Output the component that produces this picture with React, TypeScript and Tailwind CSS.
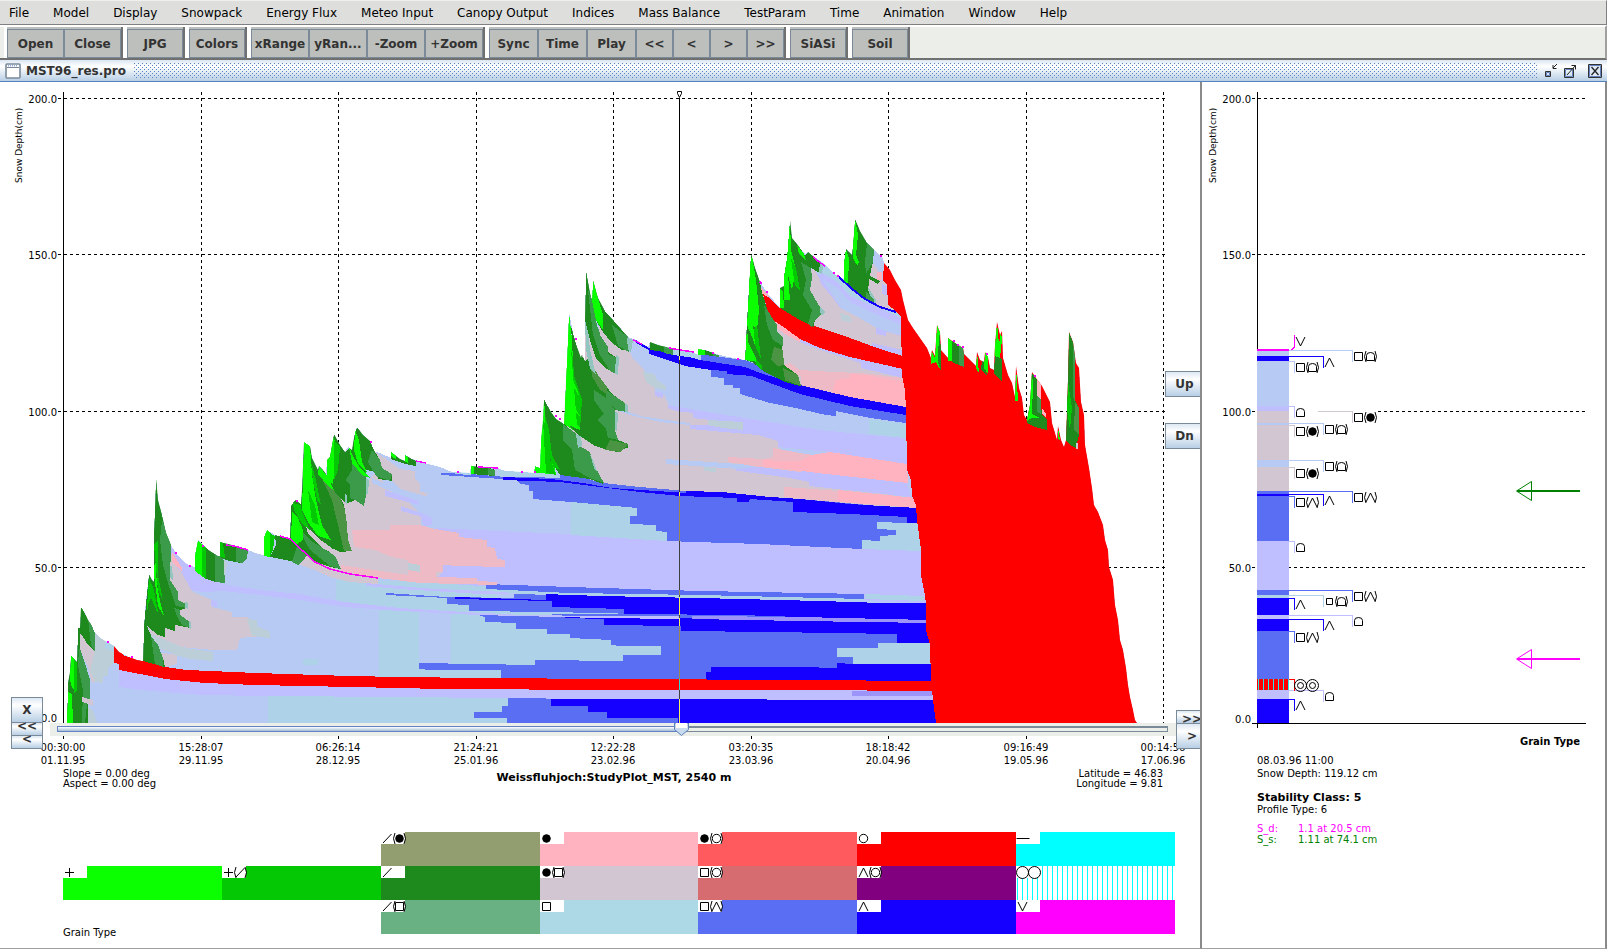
import React, { useState } from "react";

const LBLUE = "#b6caf3";
const LAV = "#bfbfff";
const LAKE = "#aed3e8";
const GREY = "#d3c6d3";
const MIST = "#bccfd8";
const SALMON = "#eebac6";
const PINK = "#ffb3c0";
const ROYAL = "#5a6ef4";
const BLUE = "#1500ff";
const PURPLE = "#9c94f8";
const RED = "#ff0000";
const MAGENTA = "#ff00ff";
const BRIGHT = "#0cff00";
const GREEN = "#04c804";
const DARK = "#1e8a1e";
const MID = "#3c9a4b";
const OLIVE = "#4b9444";
const TEAL = "#93c5bf";

const silhouette =
  "67,723 68,683 70,672 71,655 75,660 77,662 78,628 80,628 81,607 85,613 88,620 92,626 95,633 100,638 107,642 114,646 119,652 127,656 137,660 143,661 144,625 146,600 149,574 152,580 154,582 154,532 155,510 156,477 158,500 162,515 166,533 171,545 177,555 184,562 190,566 195,567 195,555 198,540 203,545 210,551 218,556 220,556 220,542 232,545 248,550 258,554 264,555 264,537 267,530 275,535 288,538 290,538 291,506 295,500 301,504 302,490 304,442 310,446 312,458 318,470 319,466 323,470 326,474 327,460 330,457 333,440 334,434 340,445 345,452 348,447 352,450 355,432 357,427 363,435 370,441 375,452 380,453 391,458 391,452 400,459 405,461 405,455 412,459 428,464 440,467 452,472 470,473 471,466 490,468 498,468 505,471 522,472 534,473 535,466 540,468 541,440 543,420 544,399 551,412 556,419 564,424 565,400 567,360 569,312 573,333 577,347 581,358 582,354 585,361 585,320 586,270 590,293 592,300 593,280 598,298 605,311 614,321 622,330 628,337 636,340 648,347 650,342 658,345 670,348 680,350 692,352 698,355 698,349 706,350 716,354 728,357 745,360 747,320 750,270 751,253 755,268 760,282 768,294 780,308 780,288 784,286 784,276 787,258 790,220 792,238 797,244 800,248 805,254 808,252 816,258 824,264 833,273 840,278 844,279 844,262 846,249 852,255 854,235 855,219 860,231 867,243 875,251 882,257 884,263 890,270 895,280 901,290 903,300 908,320 913,328 920,338 927,348 931,358 932,350 935,356 937,325 940,332 941,350 948,358 948,338 955,343 963,348 964,354 970,360 976,366 977,352 980,360 984,362 985,352 988,357 990,368 994,370 995,345 997,322 1000,335 1002,331 1003,358 1008,375 1012,383 1015,397 1016,366 1019,388 1022,398 1024,415 1027,420 1030,405 1032,372 1036,378 1042,386 1046,394 1050,402 1052,423 1055,433 1057,440 1058,426 1061,440 1064,447 1066,440 1068,380 1069,332 1073,342 1076,363 1079,368 1081,402 1084,415 1085,445 1089,468 1092,488 1094,505 1098,512 1103,525 1105,540 1108,550 1109,567 1113,580 1115,605 1118,620 1120,640 1123,650 1126,668 1128,685 1130,697 1133,710 1135,720 1137,723";

type Shape = [string, string];

const layers: Shape[] = [
  // ground layers
  [LAKE, "268,694 510,697 510,723 268,723"],
  [ROYAL, "508,697 508,706 502,706 502,712 474,712 474,718 507,718 507,723 936,723 933,699"],
  [BLUE, "551,697 551,706 588,706 588,712 607,712 607,718 678,718 678,723 936,723 933,699"],
  // mid layers, lake and faceted
  [LAKE, "336,580 497,582 497,600 480,615 336,602"],
  [LAKE, "379,606 680,612 680,680 379,677"],
  [LBLUE, "419,612 451,612 451,664 419,664"],
  [LAKE, "303,659 318,659 318,665 303,665"],
  [ROYAL, "478,615 485,617 485,622 516,623 516,629 547,629 547,634 570,634 570,638 611,640 611,645 620,646 661,646 661,655 623,655 623,661 535,660 535,665 419,663 419,669 430,670 501,670 501,679 932,682 926,612"],
  [BLUE, "565,616 679,618 800,620 930,622 930,643 897,643 897,634 835,633 768,632 681,631 681,626 604,625 604,619 565,618"],
  [LAKE, "837,648 878,648 878,643 930,643 931,665 853,665 853,657 837,657"],
  [BLUE, "706,680 706,672 711,672 711,667 800,667 837,668 837,663 853,664 931,664 932,682"],
  [ROYAL, "386,593 447,597 514,598 514,594 640,597 640,614 550,612 469,611 469,605 447,604 447,598 386,595"],
  [BLUE, "455,597 546,600 546,594 600,596 700,598 820,601 882,603 930,603 930,620 800,617 740,615 634,614 624,614 624,609 552,607 552,601 455,599"],
  // lavender slab
  [LAV, "436,528 520,532 600,535 668,541 760,544 820,547 922,551 926,603 864,600 700,595 480,586 420,582 420,540"],
  [LAKE, "497,589 700,595 864,599 864,601 700,598 497,593"],
  [ROYAL, "486,584 570,587 700,591 864,594 864,599 700,595 570,593 486,589"],
  [LAKE, "865,594 924,596 924,601 865,599"],
  // royal slab
  [ROYAL, "441,473 470,474 506,477 560,475 583,477 603,483 640,487 686,491 800,499 880,506 907,510 907,523 877,522 877,529 896,530 896,535 880,536 880,541 862,540 862,549 820,547 760,544 694,542 667,541 640,535 571,525 571,502 533,499 533,491 529,491 529,485 520,484 516,480 441,475"],
  [LAKE, "571,502 637,508 637,516 630,516 630,524 656,525 656,531 667,532 667,541 571,535"],
  [LAKE, "907,523 877,522 877,529 896,530 896,535 880,536 880,541 862,540 862,549 922,551 920,523"],
  // settled rounded grains above the slab
  [GREY, "564,424 560,380 585,330 628,350 636,360 644,366 650,383 662,390 668,403 700,412 740,420 758,430 778,441 778,447 809,475 809,482 910,498 916,508 880,506 800,499 686,491 640,487 603,483 580,477"],
  [LBLUE, "590,400 620,409 640,416 680,422 690,423 690,425 660,422 630,415 612,409"],
  [LAV, "668,403 758,418 820,426 905,436 907,464 830,452 778,447 778,441 758,435 690,429 690,425 727,425 727,422 693,418 693,413 676,411 668,408"],
  [MIST, "708,420 743,422 743,430 722,428 708,425"],
  [LBLUE, "628,337 650,347 751,362 800,388 870,418 906,423 906,438 870,435 820,430 758,420 720,414 668,405 668,396 655,393 655,385 650,380 644,370 632,358"],
  [MIST, "643,372 655,374 657,380 666,386 666,390 655,388 646,382"],
  [LAKE, "869,419 906,424 906,438 869,434"],
  [LAV, "655,391 663,393 663,398 655,396"],
  [LBLUE, "666,459 754,465 754,470 666,464"],
  [MIST, "704,467 716,468 716,472 704,471"],
  [LAV, "732,470 760,466 830,474 907,483 911,497 809,486 809,482 790,478"],
  [SALMON, "728,457 763,459 773,457 773,448 800,453 820,456 800,472 760,467 728,462"],
  [PINK, "763,460 778,461 800,461 812,455 830,452 907,464 908,483 826,474 763,466"],
  [SALMON, "784,487 800,488 838,491 838,502 784,497"],
  [PINK, "838,490 916,498 918,508 838,502"],
  [BLUE, "503,477 551,479 583,483 612,488 686,493 686,491 722,492 770,497 800,499 850,504 880,506 918,508 920,523 907,523 907,517 850,514 793,512 793,502 750,499 749,502 737,502 737,498 680,496 640,492 600,487 560,482 503,480"],
  // upper facets
  [ROYAL, "701,354 728,358 745,360 765,368 800,382 820,390 906,412 906,423 870,418 836,411 836,416 826,415 800,409 770,403 740,394 740,388 733,388 733,385 724,385 724,378 711,377 711,370 701,365"],
  [GREY, "762,300 770,318 785,328 800,339 861,359 903,370 907,407 850,396 801,386 780,378 770,340"],
  [SALMON, "784,365 790,363 800,370 833,372 861,373 903,378 907,407 850,396 801,386 801,376 784,372"],
  [PINK, "832,393 836,380 850,378 850,374 866,375 903,382 907,408 850,397"],
  [LAV, "800,337 861,356 903,366 903,378 861,368 861,363 820,350 800,342"],
  [BLUE, "636,340 649,348 679,354 700,360 745,367 760,373 800,385 850,397 906,407 906,415 850,406 800,394 770,383 752,376 727,374 727,371 711,370 685,366 649,354 649,350 636,343"],
  // late winter layers
  [LAV, "815,255 884,256 903,300 903,360 860,340 815,320"],
  [LAKE, "816,258 833,270 845,278 870,304 902,314 902,318 880,312 850,300 838,293 822,278 816,272"],
  [LAV, "820,272 838,282 850,296 902,318 902,326 880,320 850,310 820,290"],
  [LBLUE, "822,279 838,288 850,302 880,316 902,325 902,335 880,330 870,327 850,322 840,306"],
  [GREY, "813,265 822,285 833,298 840,308 856,316 880,330 902,336 902,356 850,338 800,322 806,290"],
  [MIST, "840,313 850,316 852,322 842,321"],
  [LAV, "876,328 886,331 886,336 876,334"],
  [LAV, "872,343 902,350 902,355 872,347"],
  [GREY, "868,262 884,268 888,285 888,305 896,311 875,306 866,298"],
  [LBLUE, "872,248 884,258 883,281 878,280 878,270 872,262"],
  [PINK, "877,272 882,272 882,280 877,280"],
  [LAV, "882,284 887,286 888,296 882,294"],
  [PINK, "757,284 768,294 768,302 758,296"],
  [PINK, "766,314 785,328 800,338 800,342 785,334 766,320"],
  [RED, "763,294 768,297 780,308 800,320 820,328 850,338 880,349 903,356 903,369 850,357 820,348 800,339 785,328 770,318 766,305"],
  // early winter, left
  [LAV, "165,540 172,548 184,562 195,568 204,577 223,584 260,590 300,594 345,602 400,608 445,611 523,615 600,616 680,616 680,619 600,618 478,615 400,611 345,607 300,600 260,595 223,591 205,592 190,590 178,575"],
  [GREY, "171,552 173,562 182,573 190,588 193,592 205,597 212,600 212,607 232,612 232,617 247,617 255,623 255,628 262,630 262,636 240,638 237,650 213,650 180,647 155,640 147,627 155,600"],
  [MIST, "150,633 165,640 185,648 213,652 213,661 190,659 176,655 158,648"],
  [MIST, "247,619 257,620 257,626 270,632 270,638 252,636"],
  [GREY, "157,652 177,655 177,664 165,667 157,660"],
  [PINK, "172,552 182,568 182,572 172,562"],
  [LAV, "211,600 217,601 217,607 211,606"],
  [GREY, "300,552 320,562 340,570 378,577 378,584 350,582 330,577 315,570 300,565"],
  [LAV, "366,583 420,588 480,591 508,592 508,594 480,594 400,589 366,586"],
  [GREY, "300,520 327,478 345,490 365,490 370,478 378,470 385,487 400,497 410,503 421,515 421,525 443,565 443,572 436,578 400,578 340,570 325,555"],
  [SALMON, "352,530 390,530 390,525 420,525 435,529 459,533 459,537 487,540 487,547 495,548 497,559 505,560 505,567 458,566 443,565 443,572 436,572 436,577 477,578 477,581 497,582 497,585 420,583 378,578 341,571 341,565 408,575 408,560 392,557 375,550 354,547"],
  [MIST, "408,563 420,565 420,572 408,570"],
  [LAV, "458,566 505,567 497,582 477,580 477,574 458,571"],
  [GREY, "375,452 385,458 400,469 415,471 415,479 420,484 420,492 428,493 425,496 400,489 392,480 378,470"],
  [LAV, "385,490 400,495 419,501 419,505 385,496"],
  [LAV, "401,506 424,514 432,518 432,525 424,526 420,516 401,511"],
  [LBLUE, "372,478 390,486 418,494 418,498 390,491 372,483"],
  // melt-freeze band and what lies under it
  [LAV, "119,669 140,673 205,682 400,687 932,690 933,700 594,699 400,697 268,696 200,695 140,690 119,687"],
  [PURPLE, "852,691 932,691 932,696 852,696"],
  [PURPLE, "692,616 800,617 930,620 930,623 800,621 692,619"],
  [RED, "114,645 119,651 125,656 143,661 165,667 187,670 256,673 350,676 400,677 480,678 612,679 800,680 932,681 933,691 800,690 615,690 440,689 400,688 256,685 205,683 165,679 140,674 119,670 119,664 114,663"],
  [RED, "884,262 883,281 887,285 888,305 895,310 901,317 902,375 905,390 906,410 907,470 911,480 912,496 916,505 917,520 919,535 921,550 921,575 924,590 926,603 926,630 930,645 931,680 933,700 936,723 1140,723 1140,320 900,240"],
  // November
  [GREY, "80,628 95,650 100,680 92,683 88,667 80,650"],
  [MIST, "95,630 114,642 114,663 108,668 108,675 103,677 103,683 95,682 90,670 95,650"],
  [LAKE, "105,640 114,645 114,652 105,648"],
  [DARK, "67,723 68,683 71,655 77,662 78,628 80,605 92,626 95,633 95,652 88,645 82,635 80,634 80,650 84,660 90,680 90,700 88,705 88,723"],
  [MID, "80,648 84,660 90,680 90,700 87,705 85,723 82,723 83,690 78,665 79,650"],
  [MID, "88,618 95,633 95,652 91,645"],
  [BRIGHT, "67,723 68,692 72,694 73,723"],
  [BRIGHT, "70,680 71,655 75,660 74,690 72,688"],
  [GREEN, "74,660 77,662 77,690 74,694"],
  [GREY, "82,697 93,700 93,706 88,704 82,702"],
  [MIST, "88,707 93,710 97,723 88,723"],
  // December
  [DARK, "143,661 144,625 149,574 154,582 154,532 156,477 162,515 171,545 170,580 178,592 178,600 186,604 186,608 180,610 180,615 190,622 190,628 175,625 175,631 165,628 165,637 158,635 147,626 155,645 163,658 165,667"],
  [MID, "162,520 171,545 170,580 174,588 170,590 163,565 160,540"],
  [MID, "168,575 170,580 178,592 178,600 186,604 186,608 176,606 172,595"],
  [MID, "174,608 180,610 180,615 190,622 190,628 182,625 177,616"],
  [TEAL, "170,566 172,566 173,580 170,578"],
  [TEAL, "185,602 188,603 188,609 185,608"],
  [TEAL, "189,621 191,622 191,629 189,628"],
  [MID, "151,636 158,645 163,658 163,667 155,664"],
  [BRIGHT, "154,575 155,555 157,585 161,605 164,616 158,606"],
  [GREEN, "154,545 158,540 158,575 163,600 158,590"],
  [GREEN, "147,608 149,578 154,590 158,612 150,612"],
  [DARK, "148,604 151,598 158,614 163,622 156,628 148,620"],
  [BRIGHT, "195,571 195,555 198,540 202,545 203,577"],
  [GREEN, "202,544 206,548 206,579 202,576"],
  [DARK, "206,548 215,554 215,582 206,579"],
  [MID, "215,554 222,557 225,562 225,583 215,582"],
  [MIST, "224,560 227,562 226,572 224,576"],
  [DARK, "220,557 220,542 240,546 240,563 226,560"],
  [GREEN, "220,557 220,542 223,543 225,558"],
  [MID, "236,547 248,550 247,558 243,563 236,562"],
  [BRIGHT, "264,556 264,537 267,530 270,533 270,557"],
  [GREEN, "270,533 275,536 273,550 270,557"],
  [DARK, "275,535 288,538 294,543 302,552 300,560 290,561 270,557 276,545"],
  [MID, "297,546 308,554 303,561 298,565 292,562"],
  // Christmas storm
  [DARK, "290,540 291,506 295,500 301,504 303,442 310,446 326,474 338,492 344,505 347,525 348,540 352,551 340,552 325,545 341,569 330,567 315,562 303,551"],
  [OLIVE, "320,474 330,480 338,492 345,510 347,525 348,540 352,551 344,551 338,525 332,500"],
  [MID, "296,525 310,540 335,556 341,569 330,566 310,550"],
  [GREY, "306,526 318,538 332,548 334,554 322,548 308,534"],
  [BRIGHT, "302,510 304,442 310,446 312,475 316,500 322,525 331,540 318,536 308,522"],
  [BRIGHT, "291,540 292,512 298,518 303,530 303,540 296,545"],
  [GREEN, "308,490 315,505 319,525 312,522"],
  [GREEN, "293,503 301,505 302,512 310,530 302,524 294,510"],
  [GREEN, "311,462 316,480 321,505 317,500 313,480"],
  [BRIGHT, "319,466 328,477 336,492 328,486 318,474"],
  [DARK, "327,475 327,460 334,434 345,452 351,446 357,427 370,441 375,452 380,460 382,468 392,474 392,481 378,479 378,472 366,470 367,490 364,506 355,500 346,504 335,492"],
  [MID, "352,460 366,475 367,490 364,506 355,500 350,498 350,485 346,480 352,470"],
  [MID, "372,450 380,460 382,468 392,474 390,481 376,476 368,462"],
  [TEAL, "366,478 369,480 368,494 366,494"],
  [TEAL, "345,494 347,495 347,504 345,503"],
  [BRIGHT, "327,478 327,460 334,436 336,450 333,485"],
  [GREEN, "334,440 340,447 338,470 334,480"],
  [BRIGHT, "354,450 355,430 359,440 362,462 368,474 358,464"],
  [BRIGHT, "349,447 353,456 360,468 370,478 362,475 352,463"],
  [DARK, "391,452 405,460 405,455 416,461 416,466 405,464 391,459"],
  [BRIGHT, "405,462 405,455 408,457 408,463"],
  [BRIGHT, "391,456 391,452 396,455 396,459"],
  [DARK, "471,474 471,466 490,468 495,470 495,476"],
  [BRIGHT, "471,474 471,466 474,466 474,474"],
  [MID, "488,468 495,470 495,476 488,475"],
  [LAKE, "455,472 471,472 471,475 455,474"],
  [LAKE, "498,470 535,472 560,475 560,478 498,476"],
  // February storms
  [BRIGHT, "534,473 535,466 540,468 541,430 544,399 547,420 548,440 556,474"],
  [GREEN, "543,420 546,425 549,455 556,475 546,473"],
  [DARK, "544,399 551,412 564,424 575,435 580,448 590,452 594,465 602,480 603,484 590,479 560,475 550,460 547,440"],
  [GREEN, "545,415 549,430 552,455 560,470 554,468 546,448"],
  [MID, "563,424 577,434 578,445 590,452 594,465 604,483 590,478 575,470 572,450 563,440"],
  [TEAL, "576,434 581,436 582,446 578,448"],
  [TEAL, "590,454 594,462 597,472 594,468"],
  [BRIGHT, "564,424 566,380 569,312 572,340 576,380 580,425 583,436 570,428"],
  [GREEN, "571,350 577,375 586,400 584,432 577,425"],
  [DARK, "571,326 577,347 585,361 590,357 593,367 597,375 607,387 611,393 626,404 627,412 615,410 615,430 618,440 628,444 628,448 621,449 620,452 610,451 595,446 580,436 568,425 580,430 582,400 574,375"],
  [MID, "594,390 606,398 615,410 615,430 618,440 608,438 606,428 597,420 604,414 594,400"],
  [MID, "606,390 626,404 627,412 616,410 606,400"],
  [OLIVE, "590,360 594,368 598,375 607,387 607,394 600,390 592,376"],
  [OLIVE, "610,440 628,444 621,452 605,450"],
  [TEAL, "615,412 618,413 617,432 615,430"],
  [TEAL, "625,404 628,405 628,413 625,412"],
  [BRIGHT, "571,375 578,392 580,398 573,386"],
  [BRIGHT, "568,392 574,406 580,416 572,410"],
  [TEAL, "585,320 588,330 590,350 596,375 590,368 586,350"],
  [DARK, "585,320 586,270 592,300 597,330 607,345 608,352 617,358 617,374 605,368 596,358 590,340"],
  [MID, "588,290 592,300 597,326 608,346 608,354 617,358 617,374 610,371 600,355 593,335"],
  [TEAL, "616,354 619,358 618,375 615,374"],
  [GREY, "598,322 605,333 612,342 628,352 632,362 620,358 608,347 600,335"],
  [DARK, "593,280 605,311 614,321 628,337 630,350 622,350 612,343 603,332 597,322"],
  [MID, "612,325 628,337 629,352 618,346"],
  [BRIGHT, "592,300 593,280 598,298 603,315 603,330 596,320"],
  [TEAL, "627,338 633,340 631,352 628,350"],
  // March
  [DARK, "650,350 650,342 665,346 665,352"],
  [MID, "664,346 673,349 673,355 664,353"],
  [LAKE, "673,350 701,352 701,359 673,355"],
  [BRIGHT, "698,355 698,349 705,350 705,355"],
  [DARK, "705,350 713,353 713,356 705,355"],
  [MID, "713,353 720,356 718,357 713,356"],
  [DARK, "745,360 747,320 751,253 760,282 762,292 768,312 777,325 777,332 783,338 782,350 784,365 798,375 800,386 785,382 765,372 752,362"],
  [BRIGHT, "745,360 748,310 750,265 752,256 756,280 759,310 757,330 753,325 758,362"],
  [GREEN, "754,330 757,325 760,350 762,370 756,365"],
  [DARK, "747,325 750,332 757,350 765,368 758,362 748,342"],
  [MID, "764,305 777,325 777,332 783,338 783,346 773,340 767,325"],
  [OLIVE, "774,347 783,350 784,365 778,366 771,360"],
  [OLIVE, "783,368 798,375 801,386 785,380"],
  [DARK, "780,308 780,288 784,276 787,258 790,220 800,248 805,256 808,252 822,264 820,273 811,268 812,278 810,290 818,304 822,312 815,318 814,327 800,320"],
  [BRIGHT, "784,300 784,276 787,258 790,220 791,250 796,270 792,290 788,275 790,300"],
  [BRIGHT, "780,308 780,288 783,292 784,308"],
  [BRIGHT, "797,245 804,254 806,260 799,254"],
  [GREEN, "791,258 796,268 800,290 795,286"],
  [MID, "801,262 811,268 812,278 810,290 818,304 823,312 814,322 812,327 808,324 812,310 803,295 806,280"],
  [TEAL, "820,262 823,266 822,274 819,273"],
  [TEAL, "820,306 825,312 822,316 820,312"],
  // April
  [DARK, "844,283 844,262 846,249 852,255 855,219 867,243 874,250 873,262 870,275 868,290 874,297 874,304 862,298 852,290"],
  [BRIGHT, "844,282 844,262 846,249 849,258 848,284"],
  [BRIGHT, "853,258 853,240 855,219 858,235 856,255 862,270 856,264"],
  [MID, "867,243 874,250 873,262 866,274 865,262"],
  [DARK, "858,262 868,275 880,281 878,284 866,277 858,270"],
  [TEAL, "868,288 870,290 876,300 876,304 872,303"],
  [MID, "866,292 874,300 874,304 866,300"],
  [BRIGHT, "931,364 931,350 935,358 937,325 940,332 941,371 936,362"],
  [DARK, "939,330 941,348 941,371 938,362"],
  [BRIGHT, "948,361 948,338 953,342 953,361"],
  [DARK, "952,340 959,346 959,365 952,362"],
  [MID, "959,345 964,348 964,367 959,365"],
  [BRIGHT, "976,368 977,352 979,373"],
  [DARK, "981,370 982,360 984,362 987,375"],
  [BRIGHT, "984,368 985,352 988,357 988,374"],
  [DARK, "994,374 995,352 1002,360 1002,381"],
  [BRIGHT, "994,356 997,322 999,345 1001,331 1002,340 1000,358"],
  [BRIGHT, "1015,401 1016,366 1018,401"],
  [DARK, "1027,423 1029,400 1031,372 1037,380 1040,396 1042,415 1047,420 1047,430 1035,427"],
  [BRIGHT, "1027,421 1028,405 1032,372 1033,385 1032,414 1040,418 1032,418"],
  [PINK, "1037,378 1041,385 1041,400 1037,395"],
  [MID, "1037,395 1041,400 1041,414 1037,412"],
  [PINK, "1042,408 1046,414 1046,417 1042,414"],
  [BRIGHT, "1058,439 1058,428 1060,440"],
  [DARK, "1066,440 1067,400 1069,332 1073,342 1075,400 1079,408 1079,435 1076,448 1070,445"],
  [MID, "1073,342 1075,346 1075,402 1073,396"],
  [OLIVE, "1075,402 1079,408 1079,435 1074,430"],
  [GREEN, "1067,410 1068,382 1072,408 1070,430"],
  [GREY, "1076,443 1078,443 1078,449 1076,449"],
];

const hoarLines = [
  "226,545 234,546 248,550",
  "280,536 290,539 303,551 315,562 330,569 350,574 378,578",
  "416,461 426,463",
  "478,467 498,468",
  "633,340 642,344",
  "669,348 680,350 694,352",
  "760,282 762,284",
  "813,257 818,261 825,266",
];

const hoarDots = [
  [107, 641], [131, 656], [175, 552], [189, 565], [202, 545], [296, 500], [370, 441], [457, 471], [521, 471], [534, 471],
  [555, 415], [559, 418], [575, 338], [712, 352], [737, 358], [766, 291], [833, 272], [837, 275], [880, 255],
  [953, 340], [957, 344], [962, 346], [986, 353], [1034, 375],
];

const cursorParts: [number, number, string][] = [
  [98, 356, "#000000"], [356, 360, "#f4ef5a"], [360, 492, "#33302e"], [492, 496, "#f4ef5a"], [496, 541, "#9a8850"],
  [541, 590, "#3f3f3c"], [590, 595, "#9a8850"], [595, 597, "#3f3f3c"], [597, 615, "#f4ef5a"], [615, 618, "#3f3f3c"],
  [618, 626, "#f4ef5a"], [626, 679, "#9a8850"], [679, 690, "#28d8d8"], [690, 699, "#3f3f3c"], [699, 723, "#f4ef5a"],
];

const ticks = [
  { x: 63, time: "00:30:00", date: "01.11.95" },
  { x: 201, time: "15:28:07", date: "29.11.95" },
  { x: 338, time: "06:26:14", date: "28.12.95" },
  { x: 476, time: "21:24:21", date: "25.01.96" },
  { x: 613, time: "12:22:28", date: "23.02.96" },
  { x: 751, time: "03:20:35", date: "23.03.96" },
  { x: 888, time: "18:18:42", date: "20.04.96" },
  { x: 1026, time: "09:16:49", date: "19.05.96" },
  { x: 1163, time: "00:14:56", date: "17.06.96" },
];

const depths = [
  { y: 98, label: "200.0" },
  { y: 254, label: "150.0" },
  { y: 411, label: "100.0" },
  { y: 567, label: "50.0" },
];

const svgText = "font-['DejaVu_Sans',sans-serif] text-[10px]";

function SnowChart() {
  return (
    <svg viewBox="0 82 1200 641" className="block w-full" role="img" aria-label="Snow depth over time">
      <g stroke="#000" strokeDasharray="3 3" shapeRendering="crispEdges">
        {depths.map((d) => (
          <line key={d.y} x1="58" x2="1167" y1={d.y + 0.5} y2={d.y + 0.5} />
        ))}
        {ticks.slice(1).map((t) => (
          <line key={t.x} x1={t.x + 0.5} x2={t.x + 0.5} y1="92" y2="723" />
        ))}
      </g>
      <path d="M63.5 92V723" stroke="#000" shapeRendering="crispEdges" />
      <clipPath id="snowpack">
        <polygon points={silhouette} />
      </clipPath>
      <g shapeRendering="crispEdges">
        <polygon points={silhouette} fill={LBLUE} />
        <g clipPath="url(#snowpack)">
          {layers.map(([fill, points], i) => (
            <polygon key={i} fill={fill} points={points} />
          ))}
        </g>
        <polyline points="839,277 852,289 865,299 880,307 896,312" fill="none" stroke={BLUE} strokeWidth="2" />
        {hoarLines.map((points) => (
          <polyline key={points} points={points} fill="none" stroke={MAGENTA} strokeWidth="1.5" />
        ))}
        {hoarDots.map(([x, y]) => (
          <rect key={x} x={x} y={y} width="2" height="2" fill={MAGENTA} />
        ))}
        {cursorParts.map(([top, bottom, fill]) => (
          <rect key={top} x="679" y={top} width="1" height={bottom - top} fill={fill} />
        ))}
      </g>
      <path d="M677.5 91.5h4v2l-2 4-2-4z" fill="#fff" stroke="#000" />
      <g className={svgText} textAnchor="end">
        {depths.map((d) => (
          <text key={d.y} x="57" y={d.y + 5}>{d.label}</text>
        ))}
        <text x="57" y="722">0.0</text>
      </g>
      <text className="font-['DejaVu_Sans',sans-serif] text-[9px]" transform="translate(22 183) rotate(-90)">Snow Depth(cm)</text>
    </svg>
  );
}

function TimeAxis() {
  return (
    <svg viewBox="0 736 1200 56" className="block w-full" role="img" aria-label="Time axis">
      <g stroke="#000" strokeDasharray="3 3" shapeRendering="crispEdges">
        {ticks.map((t) => (
          <line key={t.x} x1={t.x + 0.5} x2={t.x + 0.5} y1="736" y2="741" />
        ))}
      </g>
      <g className={svgText} textAnchor="middle">
        {ticks.map((t) => (
          <React.Fragment key={t.x}>
            <text x={t.x} y="751">{t.time}</text>
            <text x={t.x} y="764">{t.date}</text>
          </React.Fragment>
        ))}
      </g>
      <g className={svgText}>
        <text x="63" y="777">Slope = 0.00 deg</text>
        <text x="63" y="787">Aspect = 0.00 deg</text>
        <text x="1163" y="777" textAnchor="end">Latitude = 46.83</text>
        <text x="1163" y="787" textAnchor="end">Longitude = 9.81</text>
      </g>
      <text x="614" y="781" textAnchor="middle" className="font-['DejaVu_Sans',sans-serif] text-[11px] font-bold">
        Weissfluhjoch:StudyPlot_MST, 2540 m
      </text>
    </svg>
  );
}

function DateSlider() {
  const [value, setValue] = useState(562);
  return (
    <div className="mr-6 ml-[50px] flex h-[13px] items-start bg-[#eceeea] pt-[3px] pr-2 pl-[7px]">
      <div className="relative flex h-[6px] flex-1">
        <div className="border border-[#6382bf] bg-linear-to-b from-white to-[#a3bcd4]" style={{ flex: value }} />
        <svg width="15" height="13" viewBox="0 0 15 13" className="relative z-10 -mx-[8px] -mt-[3px] shrink-0">
          <path d="M0.5 0H14.5V6.5L7.5 12.5L0.5 6.5z" fill="#c8daee" stroke="#5b80bd" />
          <path d="M2 0H13V5H2z" fill="#fff" />
        </svg>
        <div className="border border-t-2 border-[#7a8a99] bg-[#eceeea]" style={{ flex: 1000 - value }} />
        <input
          type="range"
          aria-label="Profile date"
          min="0"
          max="1000"
          value={value}
          onChange={(e) => setValue(Number(e.target.value))}
          className="absolute -top-[3px] left-0 z-20 h-[13px] w-full cursor-pointer opacity-0"
        />
      </div>
    </div>
  );
}

type Kind = "plus" | "slash" | "dot" | "circle" | "square" | "small" | "wedge" | "vee" | "dome" | "dash" | "ring" | "twin";

function Glyph({ kind, x, y }: { kind: Kind; x: number; y: number }) {
  const shapes: Record<Kind, React.ReactNode> = {
    plus: <path d="M-4.5 0h9M0-4.5v9" />,
    slash: <path d="M-4.5 4.5L4-4.5" />,
    dot: <circle r="3.8" fill="#000" />,
    circle: <circle r="4.2" />,
    square: <path d="M-4-4h8v8h-8z" />,
    small: <path d="M-3-3h6v6h-6z" />,
    wedge: <path d="M-4.5 4.5L0-4.5 4.5 4.5" />,
    vee: <path d="M-4.5-4.5L0 4.5 4.5-4.5" />,
    dome: <path d="M-4 4V-1Q-4-4 0-4T4-1V4z" />,
    dash: <path d="M-6 0H7" />,
    ring: (
      <>
        <circle r="6" />
        <circle r="3" />
      </>
    ),
    twin: <circle r="6" />,
  };
  return (
    <g transform={`translate(${x} ${y})`} fill="none" stroke="#000">
      {shapes[kind]}
    </g>
  );
}

function Parens({ x, y }: { x: number; y: number }) {
  return <path transform={`translate(${x} ${y})`} d="M-4.5-5.5Q-7.5 0-4.5 5.5M4.5-5.5Q7.5 0 4.5 5.5" fill="none" stroke="#000" />;
}

type Cell = { cls: string; first: Kind; second?: Kind; paren?: boolean };

const legend: Cell[] = [
  { cls: "col-start-3 row-start-1 bg-[#939e70]", first: "slash", second: "dot", paren: true },
  { cls: "col-start-4 row-start-1 bg-[#ffb3c0]", first: "dot" },
  { cls: "col-start-5 row-start-1 bg-[#ff5b5f]", first: "dot", second: "circle", paren: true },
  { cls: "col-start-6 row-start-1 bg-[#ff0000]", first: "circle" },
  { cls: "col-start-7 row-start-1 bg-[#00ffff]", first: "dash" },
  { cls: "col-start-1 row-start-2 bg-[#0cff00]", first: "plus" },
  { cls: "col-start-2 row-start-2 bg-[#04c804]", first: "plus", second: "slash", paren: true },
  { cls: "col-start-3 row-start-2 bg-[#1e8a1e]", first: "slash" },
  { cls: "col-start-4 row-start-2 bg-[#d3c6d3]", first: "dot", second: "square", paren: true },
  { cls: "col-start-5 row-start-2 bg-[#d66c6f]", first: "square", second: "circle", paren: true },
  { cls: "col-start-6 row-start-2 bg-[#800080]", first: "wedge", second: "circle", paren: true },
  {
    cls: "col-start-7 row-start-2 bg-[repeating-linear-gradient(90deg,#fff_0_1px,#00ffff_1px_2px,#fff_2px_5px)]",
    first: "twin",
    second: "twin",
  },
  { cls: "col-start-3 row-start-3 bg-[#69b083]", first: "slash", second: "square", paren: true },
  { cls: "col-start-4 row-start-3 bg-[#add8e6]", first: "square" },
  { cls: "col-start-5 row-start-3 bg-[#5a6ef4]", first: "square", second: "wedge", paren: true },
  { cls: "col-start-6 row-start-3 bg-[#1500ff]", first: "wedge" },
  { cls: "col-start-7 row-start-3 bg-[#ff00ff]", first: "vee" },
];

function Legend() {
  return (
    <div className="mt-10 mr-[25px] ml-[63px] grid grid-cols-7 grid-rows-[34px_34px_34px]">
      {legend.map((c) => (
        <div key={c.cls} className={c.cls}>
          <svg width="24" height="12" className="block overflow-visible bg-white">
            <Glyph kind={c.first} x={6.5} y={6.5} />
            {c.second && <Glyph kind={c.second} x={18.5} y={6.5} />}
            {c.paren && <Parens x={18.5} y={6.5} />}
          </svg>
        </div>
      ))}
      <div className="col-span-2 col-start-1 row-start-3 -mb-[5px] self-end text-[10px] leading-3">Grain Type</div>
    </div>
  );
}

const column: [number, number, string][] = [
  [349, 351, MAGENTA], [351, 356, LBLUE], [356, 361, BLUE], [361, 406, LBLUE], [406, 411, LAV], [411, 423, GREY],
  [423, 425, LBLUE], [425, 460, GREY], [460, 467, LBLUE], [467, 491, GREY], [491, 494, ROYAL], [494, 496, BLUE],
  [496, 541, ROYAL], [541, 590, LAV], [590, 595, ROYAL], [595, 598, LAKE], [598, 615, BLUE], [615, 619, LAV],
  [619, 631, BLUE], [631, 679, ROYAL], [679, 690, RED], [690, 699, LAV], [699, 723, BLUE],
];

type Mark = [number, 1 | 2 | 3, string, Kind, Kind?];

const marks: Mark[] = [
  [350, 3, LBLUE, "square", "dome"],
  [356, 2, BLUE, "wedge"],
  [361, 1, LBLUE, "square", "dome"],
  [406, 1, LAV, "dome"],
  [411, 3, GREY, "square", "dot"],
  [423, 2, LBLUE, "square", "dome"],
  [425, 1, GREY, "square", "dot"],
  [460, 2, LBLUE, "square", "dome"],
  [467, 1, GREY, "square", "dot"],
  [491, 3, ROYAL, "square", "wedge"],
  [494, 2, BLUE, "wedge"],
  [496, 1, ROYAL, "square", "wedge"],
  [541, 1, LAV, "dome"],
  [590, 3, ROYAL, "square", "wedge"],
  [595, 2, LAKE, "small", "dome"],
  [598, 1, BLUE, "wedge"],
  [615, 3, LAV, "dome"],
  [619, 2, BLUE, "wedge"],
  [631, 1, ROYAL, "square", "wedge"],
  [690, 2, LAV, "dome"],
  [679, 1, RED, "ring", "ring"],
  [699, 1, BLUE, "wedge"],
];

function Arrow({ y, color }: { y: number; color: string }) {
  return (
    <g stroke={color} fill="none">
      <path d={`M1531.5 ${y - 9.5}L1516.5 ${y}L1531.5 ${y + 9.5}z`} />
      <path d={`M1517 ${y}H1580`} strokeWidth="2" shapeRendering="crispEdges" />
    </g>
  );
}

function ProfileChart() {
  return (
    <svg viewBox="1202 82 403 648" className="block w-full" role="img" aria-label="Snow profile">
      <g shapeRendering="crispEdges" stroke="#000">
        {depths.map((d) => (
          <line key={d.y} x1="1252" x2="1586" y1={d.y + 0.5} y2={d.y + 0.5} strokeDasharray="3 3" />
        ))}
        <path d="M1257.5 92V728M1252 723.5H1586" />
      </g>
      <g shapeRendering="crispEdges">
        {column.map(([top, bottom, fill]) => (
          <rect key={top} x="1257" y={top} width="32" height={bottom - top} fill={fill} />
        ))}
        {[1258, 1263, 1268, 1273, 1278, 1283, 1288].map((x) => (
          <rect key={x} x={x} y="679" width="1" height="11" fill="#28e8e8" />
        ))}
        <rect x="1289" y="411" width="89" height="1" fill="#fff" />
        <path d="M1289 350.5h2l3-3V335" fill="none" stroke={MAGENTA} />
      </g>
      <Glyph kind="vee" x={1300.5} y={341.5} />
      {marks.map(([y, level, color, first, second]) => {
        const x = 1265 + level * 29;
        return (
          <g key={y}>
            <path d={`M${y === 411 ? 1318 : 1289} ${y + 0.5}H${x + 0.5}V${y + 12}`} fill="none" stroke={color} shapeRendering="crispEdges" />
            <Glyph kind={first} x={x + 6.5} y={y + 6.5} />
            {second && <Glyph kind={second} x={x + 18.5} y={y + 6.5} />}
            {second && second !== "ring" && <Parens x={x + 18.5} y={y + 6.5} />}
          </g>
        );
      })}
      <Arrow y={491} color="#008000" />
      <Arrow y={659} color={MAGENTA} />
      <g className={svgText} textAnchor="end">
        {depths.map((d) => (
          <text key={d.y} x="1251" y={d.y + 5}>{d.label}</text>
        ))}
        <text x="1251" y="723">0.0</text>
      </g>
      <text className="font-['DejaVu_Sans',sans-serif] text-[9px]" transform="translate(1216 183) rotate(-90)">Snow Depth(cm)</text>
    </svg>
  );
}

const menus = [
  "File", "Model", "Display", "Snowpack", "Energy Flux", "Meteo Input", "Canopy Output", "Indices",
  "Mass Balance", "TestParam", "Time", "Animation", "Window", "Help",
];

const groups: { width: string; items: string[] }[][] = [
  [{ width: "w-[57px]", items: ["Open", "Close"] }],
  [{ width: "w-14", items: ["JPG"] }],
  [{ width: "w-14", items: ["Colors"] }],
  [{ width: "w-[58px]", items: ["xRange", "yRan...", "-Zoom", "+Zoom"] }],
  [
    { width: "w-[49px]", items: ["Sync", "Time", "Play"] },
    { width: "w-[37px]", items: ["<<", "<", ">", ">>"] },
  ],
  [{ width: "w-14", items: ["SiASi"] }],
  [{ width: "w-14", items: ["Soil"] }],
];

function Toolbar() {
  return (
    <div className="flex h-[35px] border-t-2 border-r-2 border-b-2 border-t-white border-r-[#a0a0a0] border-b-[#707070] bg-[#eceeea] pl-1">
      {groups.map((parts, i) => (
        <div key={i} className="flex items-start border-r-2 border-l-4 border-r-[#707070] border-l-white bg-[#bdbfbc] pt-[2px] first:border-l-[3px]">
          {parts.flatMap((p) =>
            p.items.map((label) => (
              <button
                key={label}
                className={`${p.width} h-[29px] border border-[#7a8a99] bg-[#bdbfbc] text-center text-[12px] leading-[26px] font-bold whitespace-nowrap text-[#333]`}
              >
                {label}
              </button>
            )),
          )}
        </div>
      ))}
    </div>
  );
}

function TitleBar() {
  return (
    <div className="flex h-[22px] items-center border-b border-[#5582bd] bg-linear-to-b from-[#dbe6f2] via-white via-30% to-[#b8cfe5] pr-[5px] pl-[5px]">
      <svg width="16" height="16" viewBox="0 0 16 16" className="shrink-0">
        <rect x="1" y="1" width="14" height="14" rx="1" fill="#fff" stroke="#7a8a99" strokeWidth="1.6" />
        <path d="M2 4.5h12" stroke="#7a8a99" />
        <path d="M3 2.8h10" stroke="#6382bf" strokeDasharray="1 1" />
      </svg>
      <h1 className="ml-[5px] text-[12px] leading-4 font-bold text-[#333]">MST96_res.pro</h1>
      <svg className="ml-2 h-4 min-w-0 flex-1" shapeRendering="crispEdges">
        <defs>
          <pattern id="grip" width="4" height="4" patternUnits="userSpaceOnUse">
            <rect width="1" height="1" fill="#5580c8" />
            <rect x="2" y="2" width="1" height="1" fill="#5580c8" />
          </pattern>
        </defs>
        <rect width="100%" height="100%" fill="url(#grip)" />
      </svg>
      <div className="ml-[6px] flex items-center">
        <button aria-label="Minimize" className="w-[19px]">
          <svg width="14" height="16" viewBox="0 0 14 16" fill="none">
            <path d="M1.5 8.5h5v5h-5z" stroke="#333" />
            <path d="M2.5 9.5h3v3h-3z" stroke="#6382bf" />
            <path d="M13 1L9 5M9 2v3.5h3.5" stroke="#222" />
          </svg>
        </button>
        <button aria-label="Maximize" className="w-[25px]">
          <svg width="14" height="16" viewBox="0 0 14 16" fill="none">
            <path d="M1.5 5.5h9v9h-9z" stroke="#333" />
            <path d="M2.5 6.5h7v7h-7z" stroke="#6382bf" />
            <path d="M4 12L12.5 2.5M8.5 2.5h4v4" stroke="#222" />
          </svg>
        </button>
        <button aria-label="Close window" className="w-[14px]">
          <svg width="14" height="16" viewBox="0 0 14 16" fill="none">
            <path d="M0.5 1.5h13v13h-13z" fill="#dfe9f5" stroke="#333" />
            <path d="M1.5 2.5h11v11h-11z" stroke="#6382bf" />
            <path d="M3.5 4L10.5 12M10.5 4L3.5 12" stroke="#222" strokeWidth="1.3" />
          </svg>
        </button>
      </div>
    </div>
  );
}

const metal =
  "border border-[#7a8a99] bg-linear-to-b from-[#dde8f3] via-white via-30% to-[#b8cfe5] text-center text-[12px] font-bold text-[#333]";

export default function App() {
  return (
    <div className="flex min-h-screen flex-col bg-white font-['DejaVu_Sans',sans-serif] text-black">
      <nav className="flex h-[25px] items-center gap-6 border-t border-r border-b border-t-[#eef0ec] border-r-[#808080] border-b-[#808080] bg-[#dedfdd] pl-[9px] text-[12px] leading-4 whitespace-nowrap">
        {menus.map((m) => (
          <button key={m}>{m}</button>
        ))}
      </nav>
      <Toolbar />
      <TitleBar />
      <main className="flex flex-1">
        <section className="relative min-w-0 flex-[1200] overflow-hidden border-r-2 border-b border-r-[#8a8a8a] border-b-[#a0a0a0]">
          <SnowChart />
          <DateSlider />
          <TimeAxis />
          <Legend />
          <div className="absolute top-[615px] left-[11px] flex w-8 flex-col">
            <button className={`${metal} h-[26px] leading-6`}>X</button>
            <button className={`${metal} -mt-px h-[14px] pb-[6px] leading-[6px]`}>&lt;&lt;</button>
            <button className={`${metal} -mt-px h-[14px] pb-[6px] leading-[6px]`}>&lt;</button>
          </div>
          <button className={`${metal} absolute top-[289px] -right-1 h-[26px] w-[39px] leading-6`}>Up</button>
          <button className={`${metal} absolute top-[341px] -right-1 h-[26px] w-[39px] leading-6`}>Dn</button>
          <div className="absolute top-[628px] -right-2 flex w-8 flex-col">
            <button className={`${metal} h-[14px] pt-1 leading-[8px]`}>&gt;&gt;</button>
            <button className={`${metal} -mt-px h-[26px] leading-6`}>&gt;</button>
          </div>
        </section>
        <section className="min-w-0 flex-[403] border-r-2 border-b border-r-[#8a8a8a] border-b-[#a0a0a0] text-[10px] leading-3">
          <ProfileChart />
          <p className="mt-[6px] pr-[25px] text-right font-bold">Grain Type</p>
          <div className="mt-[7px] pl-[55px]">
            <p className="mb-px">08.03.96 11:00</p>
            <p>Snow Depth: 119.12 cm</p>
            <p className="mt-3 text-[11px] font-bold">Stability Class: 5</p>
            <p>Profile Type: 6</p>
            <dl className="mt-[7px] grid grid-cols-[41px_auto] leading-[11px]">
              <dt className="text-[#ff00ff]">S_d:</dt>
              <dd className="text-[#ff00ff]">1.1 at 20.5 cm</dd>
              <dt className="text-[#008000]">S_s:</dt>
              <dd className="text-[#008000]">1.11 at 74.1 cm</dd>
            </dl>
          </div>
        </section>
      </main>
    </div>
  );
}
